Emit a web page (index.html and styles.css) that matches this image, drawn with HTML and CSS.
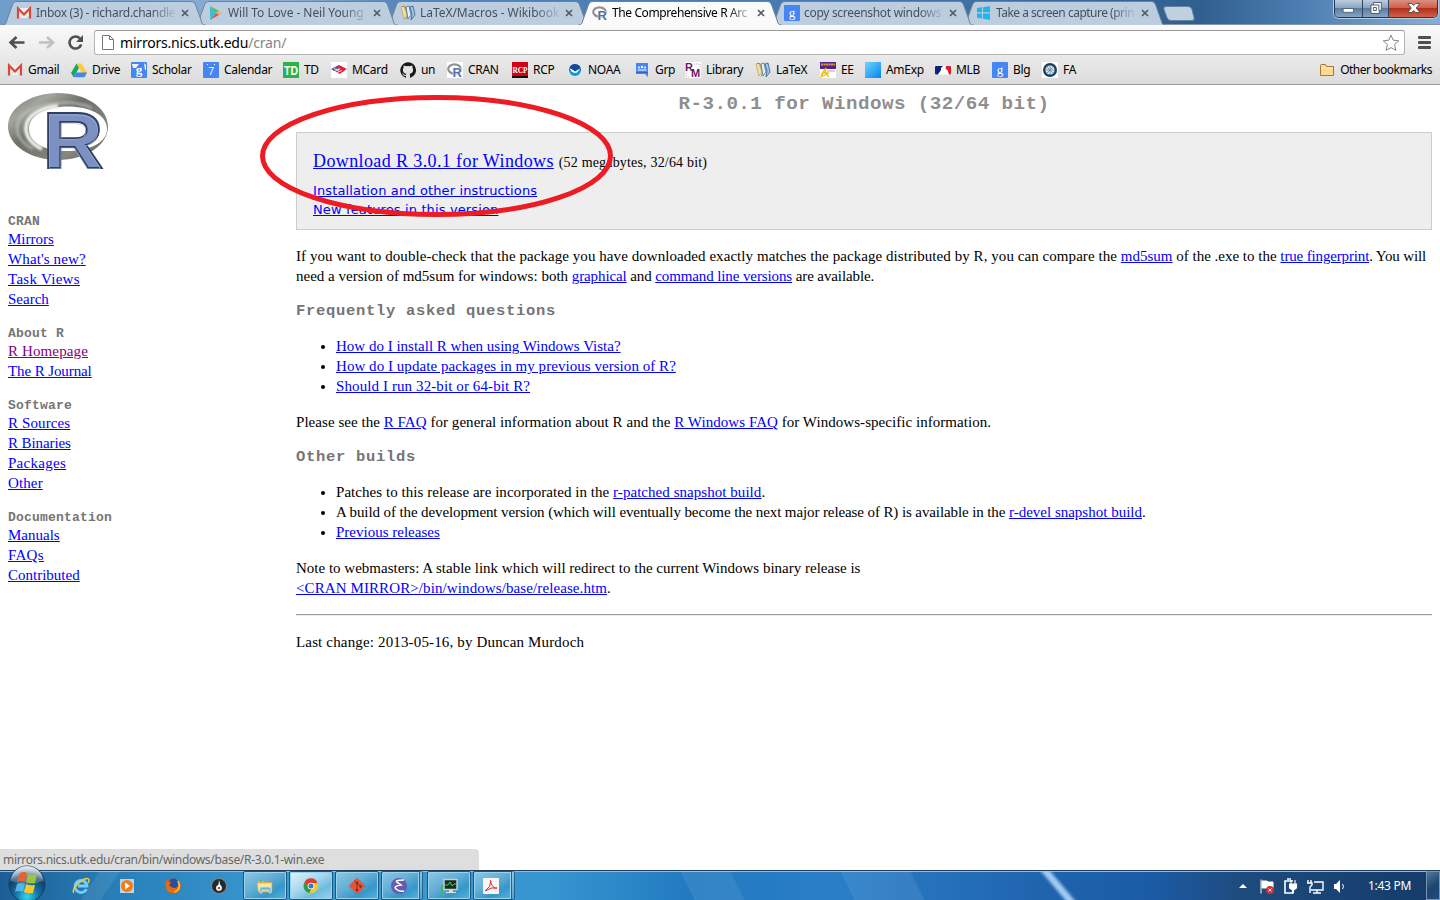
FILE: index.html
```html
<!DOCTYPE html>
<html lang="en">
<head>
<meta charset="utf-8">
<title>The Comprehensive R Archive Network</title>
<link rel="stylesheet" href="styles.css">
</head>
<body>
<svg class="defs" aria-hidden="true">
  <defs>
    <linearGradient id="ring" x1="0" y1="0" x2="1" y2="1"><stop offset="0" stop-color="#6f746d"/><stop offset=".22" stop-color="#a3a69e"/><stop offset=".42" stop-color="#6c7068"/><stop offset=".75" stop-color="#85887f"/><stop offset="1" stop-color="#555"/></linearGradient>
    <linearGradient id="gold" x1="0" y1="0" x2="0" y2="1"><stop offset="0" stop-color="#fff0bb"/><stop offset="1" stop-color="#f1c66a"/></linearGradient>
    <linearGradient id="amex" x1="0" y1="0" x2="1" y2="1"><stop offset="0" stop-color="#6fd4ff"/><stop offset="1" stop-color="#0584f0"/></linearGradient>
    <radialGradient id="orb" cx=".5" cy=".85" r=".8"><stop offset="0" stop-color="#37d6ee"/><stop offset=".4" stop-color="#1272a5"/><stop offset=".75" stop-color="#123f66"/><stop offset="1" stop-color="#8cabc2"/></radialGradient>
    <linearGradient id="orbshine" x1="0" y1="0" x2="0" y2="1"><stop offset="0" stop-color="#fff" stop-opacity=".75"/><stop offset="1" stop-color="#fff" stop-opacity=".1"/></linearGradient>
  </defs>
  <symbol id="gmail" viewBox="0 0 16 16"><path d="M2 3h12v10H2z" fill="#efefef"/><path d="M3 13l5-5 5 5" fill="none" stroke="#ccc"/><path d="M2 13.500V3.500l6 6 6-6v10" fill="none" stroke="#d9483b" stroke-width="2.200"/></symbol>
  <symbol id="books" viewBox="0 0 16 16"><path d="M1 2l3-1 3 9-3 4-1-4z" fill="#f4dfa0" stroke="#ba9c53" stroke-width=".7"/><path d="M2 1.500l3 0 3 8.500-2 4.500" fill="none" stroke="#8f7a43" stroke-width=".7"/><path d="M6 2l3-1 2 9-3 4z" fill="#e3f0f7" stroke="#476f94" stroke-width=".8"/><path d="M10 2l3-1 2 9-4 5 1-6z" fill="#9ecbed" stroke="#335b83" stroke-width=".8"/></symbol>
  <symbol id="x" viewBox="0 0 8 8"><path d="M1 1l6 6M7 1L1 7" stroke="#555b63" stroke-width="1.700"/></symbol>
  <symbol id="tabshape" viewBox="0 0 204 24"><path d="M0 24c4 0 4-2 5-5L10 5c1-3 2-4.500 5-4.500h174c3 0 4 1.500 5 4.500l5 14c1 3 1 5 5 5" fill="currentColor" stroke="#6e8297"/></symbol>
</svg>

<header class="browser">
  <div class="tabstrip">
    <div class="tab"><svg class="shape"><use href="#tabshape"/></svg><svg class="fav"><use href="#gmail"/></svg><span class="title snug">Inbox (3) - richard.chandle</span><svg class="close"><use href="#x"/></svg></div>
    <div class="tab"><svg class="shape"><use href="#tabshape"/></svg><svg class="fav" viewBox="0 0 16 16"><path d="M2 1l6 7-6 7z" fill="#37c2d3"/><path d="M2 1l9 5-3 2z" fill="#58b96e"/><path d="M11 6l3 2-3 2-3-2z" fill="#f4b44b"/><path d="M2 15l6-7 3 2z" fill="#df5267"/></svg><span class="title">Will To Love - Neil Young</span><svg class="close"><use href="#x"/></svg></div>
    <div class="tab"><svg class="shape"><use href="#tabshape"/></svg><svg class="fav"><use href="#books"/></svg><span class="title">LaTeX/Macros - Wikibook</span><svg class="close"><use href="#x"/></svg></div>
    <div class="tab active"><svg class="shape"><use href="#tabshape"/></svg><svg class="fav" viewBox="0 0 16 16"><ellipse cx="7.500" cy="7" rx="6.300" ry="4.600" fill="none" stroke="#8f9294" stroke-width="2.200"/><text x="5.500" y="14.500" class="mini-r">R</text></svg><span class="title">The Comprehensive R Arc</span><svg class="close"><use href="#x"/></svg></div>
    <div class="tab"><svg class="shape"><use href="#tabshape"/></svg><svg class="fav" viewBox="0 0 16 16"><rect width="16" height="16" rx="1" fill="#4486f4"/><text x="8" y="11.500" class="mini-g">g</text></svg><span class="title snug">copy screenshot windows</span><svg class="close"><use href="#x"/></svg></div>
    <div class="tab"><svg class="shape"><use href="#tabshape"/></svg><svg class="fav" viewBox="0 0 16 16"><path d="M1 3l5-.7v5H1zM7 2.200L14 1v6.300H7zM1 8.400h5v5.100l-5-.7zM7 8.400h7V15l-7-1.300z" fill="#22b4ee"/></svg><span class="title tight">Take a screen capture (prin</span><svg class="close"><use href="#x"/></svg></div>
    <svg class="newtab" viewBox="0 0 32 15"><path d="M3 .5h22q3 0 4 3l2 8q1 3-2 3H8q-3 0-4-3L1 3.500q-1-3 2-3z" fill="#bfd0df" stroke="#6481a0"/></svg>
    <div class="winbuttons">
      <span class="min"><svg viewBox="0 0 28 17"><rect x="8.500" y="8.500" width="11" height="4" fill="#fff" stroke="#56657a"/></svg></span>
      <span class="max"><svg viewBox="0 0 26 17"><path d="M10.500 2.500h8v8h-2v3h-8.500v-8.500h2.500z" fill="#fff" stroke="#4d5c70"/><path d="M10.500 7.500h3v3h-3zM10.500 5h5.500v5.500" fill="none" stroke="#4d5c70"/></svg></span>
      <span class="quit"><svg viewBox="0 0 46 17"><path d="M18 3.500h4l2 2 2-2h4L26.500 8l3.500 4.500h-4l-2-2-2 2h-4L21.500 8z" fill="#fff" stroke="#65504f"/></svg></span>
    </div>
  </div>
  <div class="toolbar">
    <svg class="nav" viewBox="0 0 95 35"><path d="M25.500 17.500H12M17.500 12l-6 5.500 6 5.500" fill="none" stroke="#505050" stroke-width="2.600"/><path d="M40 17.500h13M48 12l6 5.500-6 5.500" fill="none" stroke="#c1c1c1" stroke-width="2.600"/><path d="M81 13.500a6 6 0 1 0 1.200 6" fill="none" stroke="#505050" stroke-width="2.600"/><path d="M84 10v7h-7z" fill="#505050"/></svg>
    <div class="omnibox">
      <svg class="page" viewBox="0 0 12 15"><path d="M.5.500h7l4 4v10H.5zM7.500.500v4h4" fill="#fff" stroke="#777"/></svg>
      <span class="url">mirrors.nics.utk.edu<i>/cran/</i></span>
      <svg class="star" viewBox="0 0 18 18"><path d="M9 1.200l2.200 5 5.600.6-4.200 3.700 1.300 5.800L9 13.600 4.100 16.300l1.300-5.800L1.200 6.800l5.600-.6z" fill="#fff" stroke="#858585"/></svg>
    </div>
    <div class="burger"><b></b><b></b><b></b></div>
  </div>
  <nav class="bookmarks">
    <span><svg><use href="#gmail"/></svg>Gmail</span>
    <span><svg viewBox="0 0 16 16"><path d="M5.500 1.500h5L16 11h-5z" fill="#fc3"/><path d="M5.500 1.500L0 11l2.600 4.200L8 6z" fill="#17a765"/><path d="M5.500 10.500H16l-2.500 4.700H2.600z" fill="#4587e8"/></svg>Drive</span>
    <span><svg viewBox="0 0 16 16"><rect width="16" height="16" rx="1" fill="#4486f4"/><path d="M1 2h7L5 6H2zM13 1l2 2v5h-1z" fill="#fff" opacity=".9"/><text x="8" y="11.500" class="mini-g bold">g</text></svg>Scholar</span>
    <span><svg viewBox="0 0 16 16"><rect width="16" height="16" rx="1" fill="#4486f4"/><path d="M4 2.500h1M11 2.500h1" stroke="#fff"/><text x="8" y="13" class="mini-day">7</text></svg>Calendar</span>
    <span><svg viewBox="0 0 16 16"><rect width="16" height="16" fill="#2bb34b"/><text x="1" y="12.500" textLength="14" lengthAdjust="spacingAndGlyphs" class="mini-td">TD</text></svg>TD</span>
    <span><svg viewBox="0 0 16 16"><rect width="16" height="16" fill="#fff"/><path d="M0 7l6-3 3 2-6 3z" fill="#3767c5"/><path d="M5 4.500l3-1.500 8 4-3 1.500z" fill="#d8222f"/><path d="M3 8.500l6-2 5 2L8.500 12z" fill="#d8222f"/><path d="M4 9l5-2M6 10.500l5-2M3 6.500l5 2" stroke="#fff" stroke-width=".8"/></svg>MCard</span>
    <span><svg viewBox="0 0 16 16"><path d="M8 .2a8 8 0 0 0-2.500 15.500c.4.100.5-.2.500-.4v-1.400C3.800 14.400 3.300 13 3.300 13c-.4-.9-.9-1.200-.9-1.200-.7-.5.100-.5.100-.5.800.1 1.200.8 1.200.8.700 1.300 1.900.9 2.300.7.100-.5.300-.9.500-1.100-1.800-.2-3.600-.9-3.600-4 0-.9.300-1.600.8-2.100-.1-.2-.4-1 .1-2.100 0 0 .7-.2 2.200.8a7.500 7.500 0 0 1 4 0c1.500-1 2.200-.8 2.200-.8.500 1.100.200 1.900.1 2.100.5.500.8 1.200.8 2.100 0 3.100-1.900 3.800-3.600 4 .3.300.5.800.5 1.500v2.200c0 .2.100.5.500.4A8 8 0 0 0 8 .2z" fill="#191919"/></svg>un</span>
    <span><svg class="onwhite" viewBox="0 0 16 16"><ellipse cx="7.500" cy="7" rx="6.300" ry="4.600" fill="none" stroke="#8f9294" stroke-width="2.200"/><text x="5.500" y="14.500" class="mini-r">R</text></svg>CRAN</span>
    <span><svg viewBox="0 0 16 16"><rect width="16" height="16" fill="#d2001a"/><path d="M0 14h16v2H0z" fill="#111"/><text x=".5" y="11" textLength="15" lengthAdjust="spacingAndGlyphs" class="mini-rcp">RCP</text></svg>RCP</span>
    <span><svg viewBox="0 0 16 16"><circle cx="8" cy="8" r="6" fill="#079ddb"/><path d="M2 8a6 6 0 0 1 12 0L8 10z" fill="#164a9b"/><path d="M2 6l4 2 2 1.500L14 6l-4 4.500-2 .5-3-1z" fill="#fff"/></svg>NOAA</span>
    <span><svg viewBox="0 0 16 16"><path d="M2 1h12v14l-3-3H2z" fill="#4486f4"/><circle cx="5" cy="5.500" r="1" fill="#fff"/><circle cx="8" cy="5" r="1.200" fill="#fff"/><circle cx="11" cy="5.500" r="1" fill="#fff"/><path d="M3.500 8.500V7.500h9v1z" fill="#fff"/><path d="M2 10.500h12" stroke="#2f67c9"/></svg>Grp</span>
    <span><svg viewBox="0 0 16 16"><rect width="16" height="16" fill="#fff"/><path d="M9 2h6v4M1 11v4h4" fill="none" stroke="#c9a5c7" stroke-dasharray="1"/><text x="0" y="9" class="mini-rm">R</text><text x="6" y="15" class="mini-rm">M</text></svg>Library</span>
    <span><svg><use href="#books"/></svg>LaTeX</span>
    <span><svg viewBox="0 0 16 16"><rect width="16" height="16" fill="#fff"/><path d="M0 0h16v7H0z" fill="#56208c"/><path d="M1 2.500h14" stroke="#e29d37" stroke-dasharray="2 .5" stroke-width="2"/><path d="M1 13l5-7-1 5h4l-8 4 3-5 5 5" fill="none" stroke="#efc21b" stroke-width="1.300"/><path d="M7 9h8" stroke="#b79ad1"/></svg>EE</span>
    <span><svg viewBox="0 0 16 16"><rect width="16" height="16" fill="url(#amex)"/></svg>AmExp</span>
    <span><svg viewBox="0 0 16 16"><rect y="4" width="16" height="8.500" rx="1" fill="#fff"/><path d="M1 4h7L6 6v2l-3 4.500H1q-1 0-1-1V5q0-1 1-1z" fill="#0b257c"/><path d="M11 4h4q1 0 1 1v6.500q0 1-1 1h-1L12.500 8l-2-1z" fill="#dc1b2e"/><path d="M9 4.500h1.500L10 7l3 5.500h-1.500L9.500 9l-3 3.500H3L7 8z" fill="#fff"/></svg>MLB</span>
    <span><svg viewBox="0 0 16 16"><rect width="16" height="16" rx="1" fill="#4486f4"/><text x="8" y="11.500" class="mini-g">g</text></svg>Blg</span>
    <span><svg viewBox="0 0 16 16"><rect width="16" height="16" fill="#fff"/><circle cx="8" cy="8" r="7" fill="#173f63"/><circle cx="8" cy="8" r="4.600" fill="#dce5e7"/><path d="M8 4v8M4 8h8M5 5l6 6M11 5l-6 6" stroke="#68899c" stroke-width=".8"/></svg>FA</span>
    <span class="other"><svg viewBox="0 0 16 16"><path d="M1.500 13.500v-10q0-1 1-1h4l1 2h7v9z" fill="#ffd98c" stroke="#a9742d"/><path d="M2 6h12" stroke="#fff0c8"/></svg>Other bookmarks</span>
  </nav>
</header>

<main class="page-body">
  <aside class="side">
    <svg class="rlogo" viewBox="0 0 100 76"><path fill-rule="evenodd" d="M50 0c28 0 50 15 50 33.500S78 67 50 67 0 52 0 33.500 22 0 50 0zM60 13.500C38 13.500 21 22 21 36s16 22 38 22 40-8 40-22-17-22.500-39-22.500z" fill="url(#ring)"/><path d="M84 15C58 3 9 12 9 35c0 8 6 16 16 21" fill="none" stroke="#c2c5bd" stroke-width="3" opacity=".6" class="soft"/><path d="M50 13c-20 2-32 11-32 22 0 9 6 16 16 21" fill="none" stroke="#eeefeb" stroke-width="4" class="soft"/><text x="34.500" y="75" textLength="61" lengthAdjust="spacingAndGlyphs" class="logo-r">R</text><text x="36" y="74.500" textLength="58" lengthAdjust="spacingAndGlyphs" class="logo-r inner">R</text></svg>
    <section><h4>CRAN</h4><a>Mirrors</a><a class="wide">What's new?</a><a class="wider">Task Views</a><a>Search</a></section>
    <section><h4>About R</h4><a class="visited wide">R Homepage</a><a class="narrow">The R Journal</a></section>
    <section><h4>Software</h4><a class="wide">R Sources</a><a class="narrow">R Binaries</a><a class="wider">Packages</a><a class="wide">Other</a></section>
    <section><h4>Documentation</h4><a>Manuals</a><a class="wider">FAQs</a><a>Contributed</a></section>
  </aside>
  <article class="content">
    <h1>R-3.0.1 for Windows (32/64 bit)</h1>
    <div class="download">
      <p class="main-link"><a>Download R 3.0.1 for Windows</a> <small>(52 megabytes, 32/64 bit)</small></p>
      <p class="sub-link"><a>Installation and other instructions</a></p>
      <p class="sub-link"><a>New features in this version</a></p>
    </div>
    <p><span class="check">If you want to double-check that the package you have downloaded exactly matches the package distributed by R, you can compare the </span><a>md5sum</a> of the .exe to the <span class="verify"><a>true fingerprint</a>. You will</span><br>need a version of md5sum for windows: both <span class="need"><a>graphical</a> and <a>command line versions</a> are available.</span></p>
    <h3>Frequently asked questions</h3>
    <ul><li><a>How do I install R when using Windows Vista?</a></li><li class="loose"><a>How do I update packages in my previous version of R?</a></li><li class="looser"><a>Should I run 32-bit or 64-bit R?</a></li></ul>
    <p class="loose">Please see the <a>R FAQ</a> for general information about R and the <a>R Windows FAQ</a> for Windows-specific information.</p>
    <h3>Other builds</h3>
    <ul><li class="loose">Patches to this release are incorporated in the <a>r-patched snapshot build</a>.</li><li><span class="devel">A build of the development version (which will eventually become the next major release of R) is available in the </span><a>r-devel snapshot build</a>.</li><li><a>Previous releases</a></li></ul>
    <p>Note to webmasters: A stable link which will redirect to the current Windows binary release is<br><span class="looser"><a>&lt;CRAN MIRROR&gt;/bin/windows/base/release.htm</a>.</span></p>
    <hr>
    <p class="changed">Last change: 2013-05-16, by Duncan Murdoch</p>
  </article>
</main>
<svg class="circle" viewBox="0 0 354 123"><ellipse cx="176.500" cy="61" rx="174" ry="58.500" fill="none" stroke="#ed1c24" stroke-width="5"/></svg>

<div class="status">mirrors.nics.utk.edu/cran/bin/windows/base/R-3.0.1-win.exe</div>
<footer class="taskbar">
  <svg class="glow" viewBox="0 0 1440 30" preserveAspectRatio="none"><path d="M100 0h20l-20 30H80zM680 0h50l15 30h-50zM840 0h70l15 30h-70z" fill="#fff" opacity=".08"/><path d="M1042-4l32 38" fill="none" stroke="#a9d0f5" stroke-width="7" opacity=".95" class="streak"/></svg>
  <svg class="start" viewBox="0 0 38 36"><circle cx="19" cy="19" r="18" fill="url(#orb)" stroke="#15405f"/><path d="M3 16a16 15 0 0 1 32 0q-16 7-32 0z" fill="url(#orbshine)"/><path d="M12 8q4-2 7 0l-2 9q-4-2-8 0z" fill="#ec6030"/><path d="M20 9q5 2 9 0l-2 9q-5 1-9-1z" fill="#9ac53c"/><path d="M9 19q4-2 8 0l-2 8q-4-2-8 0z" fill="#51b6e9"/><path d="M18 19q4 2 9 1l-2 8q-5 1-9-1z" fill="#fbc72f"/></svg>
  <div class="quick">
    <svg viewBox="0 0 18 18"><path d="M14.500 12a6 6 0 1 1 .5-3H6" fill="none" stroke="#75cffa" stroke-width="2.800"/><path d="M2 16C-2 12 13-1 16.500 2c1 1 .2 3-.5 4" fill="none" stroke="#f5c63d" stroke-width="1.500"/></svg>
    <svg viewBox="0 0 18 18"><rect x="2" y="2" width="14" height="14" fill="#b1d6ee"/><circle cx="9" cy="9" r="6" fill="#f47c13"/><path d="M7 5.500l5 3.500-5 3.500z" fill="#fff"/></svg>
    <svg viewBox="0 0 18 18"><circle cx="9" cy="9" r="7.500" fill="#dc5a17"/><circle cx="9.500" cy="6.500" r="5" fill="#284f9c"/><path d="M2 3q2 2 5 2l-2 3q4 5 9 2l2-6q3 12-7 12Q0 16 2 3z" fill="#e86a13"/><path d="M14 4q4 9-4 11" fill="none" stroke="#ffc43b" stroke-width="1.500"/></svg>
    <svg viewBox="0 0 18 18"><circle cx="9" cy="9" r="7.500" fill="#25282c" stroke="#858b92"/><circle cx="9" cy="11" r="3" fill="#e9e9e9"/><path d="M9 3l2 8H8z" fill="#fff"/><circle cx="9" cy="11" r="1" fill="#333"/></svg>
  </div>
  <div class="tasks">
    <span><svg viewBox="0 0 18 18"><path d="M2 4h5l1 1h8v10H2z" fill="#e2b94c"/><path d="M1 6h15v9H2z" fill="url(#gold)" stroke="#c6a048" stroke-width=".7"/><path d="M4 16v-4q0-2 2-2h7q2 0 2 2v4h-2v-3H6v3z" fill="#61bbdc" stroke="#d8f1fa" stroke-width=".6"/><path d="M4 4h2" stroke="#25b536"/></svg></span>
    <span class="current"><svg viewBox="0 0 18 18"><circle cx="9" cy="9" r="7" fill="#f9c929"/><path d="M2.500 5.500A7 7 0 0 1 15.500 6H9L6 11z" fill="#df3c2f"/><path d="M2.500 5.500l4 6L9 12l-1.500 4A7 7 0 0 1 2.500 5.500z" fill="#259f4a"/><circle cx="9" cy="9" r="3.300" fill="#fff"/><circle cx="9" cy="9" r="2.500" fill="#3979bd"/></svg></span>
    <span><svg viewBox="0 0 18 18"><path d="M9 .8L17.200 9 9 17.200.8 9z" fill="#ed4f32"/><path d="M6.500 3.500L9 6v7M9 6.500l4 3" fill="none" stroke="#8a3426" stroke-width="1"/><circle cx="9" cy="6" r="1.200" fill="#623025"/><circle cx="9" cy="13" r="1.200" fill="#623025"/><circle cx="12.500" cy="9.500" r="1.200" fill="#623025"/></svg></span>
    <span class="stack"><svg viewBox="0 0 18 18"><circle cx="9" cy="9" r="8" fill="#655baf"/><path d="M14 3Q3 3 8 6l3 2Q3 9 6 12t8 2" fill="none" stroke="#fff" stroke-width="1.500"/></svg></span>
    <span class="monitor"><svg viewBox="0 0 18 18"><rect x="4" y="2.500" width="13" height="10" fill="#182c24" stroke="#c7cccd" stroke-width="1.500"/><path d="M5 8h3l2-3 2 4 2-2h2" fill="none" stroke="#2cdb4a"/><path d="M9 13h4v2h3v1H6v-1h3z" fill="#d8dede"/><path d="M1 8h2v8H1z" fill="#3bba47"/></svg></span>
    <span class="stack"><svg viewBox="0 0 18 18"><rect x="1" y="1" width="16" height="16" rx="1" fill="#f8f6f5"/><path d="M3 14Q9 10 9 4q-1.500-2 0 2 2.500 6 6 5-5-1.500-12 3" fill="none" stroke="#d72d2d"/></svg></span>
  </div>
  <div class="tray">
    <svg viewBox="0 0 112 20"><path d="M3 12l4-4 4 4z" fill="#fff"/><path d="M25 3.500v14M26 5h5l1 1h5v6H26z" fill="#fff" stroke="#fff"/><circle cx="34" cy="14" r="4" fill="#d43032"/><path d="M32.500 12.500l3 3m0-3l-3 3" stroke="#fff"/><path d="M57 5h-8v12h8M51 3h4" fill="none" stroke="#fff" stroke-width="1.600"/><path d="M53.500 8h7v4l-3 2v3h-1v-3l-3-2zM55 4v4m4-4v4" fill="#fff" stroke="#fff" stroke-width="1.100"/><path d="M78 6h9v8H75M81 14v3M77 17h8M72 4v3m3-3v3M71 7h5v2l-2 2v6" fill="none" stroke="#fff" stroke-width="1.400"/><path d="M98 8h2l4-4v13l-4-4h-2z" fill="#fff"/><path d="M106.500 8q2 2.500 0 5" fill="none" stroke="#fff"/></svg>
    <time>1:43 PM</time>
    <i class="peek"></i>
  </div>
</footer>
</body>
</html>
```
FILE: styles.css
```css
* { box-sizing: border-box; }
body { margin: 0; width: 1440px; height: 900px; overflow: hidden; position: relative; background: #fff; display: flex; flex-direction: column; font-family: "Liberation Serif", serif; font-size: 15px; line-height: 20px; color: #000; }
svg { display: block; flex: none; }
.defs { position: absolute; width: 0; height: 0; }

.mini-g { font: 13px "Liberation Serif", serif; fill: #fff; text-anchor: middle; letter-spacing: 0; }
.mini-g.bold { font-weight: bold; }
.mini-r { font: bold 13px "Liberation Sans", sans-serif; fill: #5570a8; stroke: #fff; stroke-width: 1px; paint-order: stroke; letter-spacing: 0; }
.mini-day { font: 10px "Open Sans", sans-serif; fill: #fff; text-anchor: middle; letter-spacing: 0; }
.mini-td { font: bold 13px "Liberation Sans", sans-serif; fill: #fff; letter-spacing: 0; }
.mini-rcp { font: bold 9px "Liberation Serif", serif; fill: #fff; letter-spacing: 0; }
.mini-rm { font: bold 11px "Liberation Sans", sans-serif; fill: #68186a; letter-spacing: 0; }
.logo-r { font: bold 79px "Liberation Sans", sans-serif; fill: #7d90c2; stroke: #303e62; stroke-width: 1.800px; }
.logo-r.inner { font-size: 78px; fill: none; stroke: #a9b8df; stroke-width: .5px; }
.soft { filter: blur(1px); }

.browser { height: 85px; border-bottom: 1px solid #9d9d9d; background: linear-gradient(#fafafa 25px, #dcdcdc 84px); font-family: "Noto Sans", sans-serif; font-size: 12px; }
.tabstrip { height: 25px; display: flex; padding-left: 2px; padding-top: 1px; background: linear-gradient(90deg, #6f9dcc 0, #8cb0d6 20%, #5285b8 28%, #4579ad 60%, #31608f 83.500%, #4a7cb0 90%, #86afd6 100%); border-bottom: 1px solid #8295a9; }
.tab { position: relative; width: 204px; height: 24px; margin-right: -12px; display: flex; align-items: center; padding: 0 13px 0 14px; color: #bccde0; z-index: 1; flex: none; }
.tab:nth-child(1) { z-index: 4; } .tab:nth-child(2) { z-index: 3; } .tab:nth-child(3) { z-index: 2; } .tab:nth-child(5) { z-index: 3; }
.tab.active { z-index: 6; color: #fafafa; }
.shape { position: absolute; left: 0; top: 0; width: 204px; height: 24px; }
.fav { position: relative; width: 16px; height: 16px; }
.title { position: relative; margin-left: 4px; width: 140px; overflow: hidden; white-space: nowrap; color: #46505c; letter-spacing: -.05px; mask-image: linear-gradient(90deg, #000 115px, transparent 142px); }
.title.snug { letter-spacing: -.3px; }
.title.tight { letter-spacing: -.5px; }
.active .title { color: #000; letter-spacing: -.4px; }
.close { position: relative; width: 8px; height: 8px; margin-left: 5px; }
.newtab { width: 32px; height: 15px; margin: 5px 0 0 9px; }
.winbuttons { margin: -1px 2px 0 auto; width: 104px; height: 18px; display: flex; border: 1px solid #26384f; border-top: 0; border-radius: 0 0 5px 5px; overflow: hidden; box-shadow: 0 0 0 1px #b4cde4; }
.winbuttons span { background: linear-gradient(#bccddd, #8aa5c1 45%, #5b7da2 50%, #86a5c5); border-right: 1px solid #33465e; }
.winbuttons svg { height: 17px; width: 100%; }
.min { width: 28px; } .max { width: 27px; }
.winbuttons .quit { width: 48px; border: 0; background: linear-gradient(#dc9182, #ce604d 45%, #b3301c 50%, #ce6249); }

.toolbar { height: 35px; display: flex; align-items: center; }
.nav { width: 95px; height: 35px; margin-left: -1px; }
.omnibox { width: 1311px; height: 25px; border: 1px solid #b3b3b3; border-top-color: #999; border-radius: 3px; background: #fff; display: flex; align-items: center; padding: 0 4px 0 7px; }
.page { width: 12px; height: 15px; }
.url { margin-left: 6px; flex: 1; font-size: 14px; letter-spacing: -.2px; }
.url i { color: #858585; font-style: normal; }
.star { width: 18px; height: 18px; }
.burger { margin-left: 13px; width: 13px; display: grid; gap: 2px; }
.burger b { height: 3px; background: #505050; border-radius: 1px; }
.bookmarks { height: 24px; padding: 0 8px 4px 7px; display: grid; grid-template-columns: 64px 60px 72px 80px 48px 69px 47px 65px 55px 67px 51px 70px 65px 45px 70px 57px 50px 60px 1fr; align-items: center; letter-spacing: -.3px; }
.bookmarks span { display: flex; align-items: center; gap: 5px; white-space: nowrap; }
.bookmarks svg { width: 16px; height: 16px; }
.bookmarks .onwhite { background: #fff; }
.bookmarks .other { justify-self: end; letter-spacing: -.5px; }

a { color: #00f; text-decoration: underline; }
a.visited { color: #800080; }
p, h1, h3, h4, ul { margin: 0; }
.page-body { display: flex; padding: 8px 8px 0; }
.side { width: 288px; display: flex; flex-direction: column; gap: 16px; }
.side section { display: flex; flex-direction: column; align-items: flex-start; }
.rlogo { width: 100px; height: 76px; margin-bottom: 28px; }
.wide { letter-spacing: .12px; }
.wider { letter-spacing: .28px; }
.narrow { letter-spacing: -.1px; }
h1, h3, h4 { font-family: "Liberation Mono", monospace; color: #757575; }
h4 { font-size: 13px; line-height: 14px; padding-top: 2px; letter-spacing: .2px; }
.content { width: 1136px; display: flex; flex-direction: column; }
h1 { color: #8e8e8e; font-size: 19.200px; line-height: 22px; text-align: center; margin-bottom: 17px; letter-spacing: .45px; }
.download { height: 98px; border: 1px solid #ccc; background: #eee; padding: 17px 16px; margin-bottom: 16px; }
.main-link { font-size: 18px; line-height: 22px; margin-bottom: 7px; letter-spacing: .39px; }
small { font-size: 14px; letter-spacing: .18px; }
.sub-link { font-family: "DejaVu Sans", sans-serif; font-size: 13px; line-height: 19px; letter-spacing: .13px; }
h3 { font-size: 15.500px; line-height: 18px; padding-top: 2px; margin: 14px 0 16px; letter-spacing: .7px; }
ul { padding-left: 40px; margin-bottom: 16px; }
hr { width: 100%; height: 2px; margin: 16px 0; border: 0; border-top: 1px solid #9a9a9a; border-bottom: 1px solid #eee; }
.content p, .content li { white-space: nowrap; }
.check { letter-spacing: .061px; }
.verify { letter-spacing: -.15px; }
.need { letter-spacing: -.11px; }
.loose { letter-spacing: .046px; }
.looser { letter-spacing: .1px; }
.devel { letter-spacing: -.104px; }
.changed { letter-spacing: .155px; }
.circle { position: absolute; left: 260px; top: 95px; width: 354px; height: 123px; }

.status { position: absolute; left: 0; top: 849px; width: 479px; height: 21px; padding-left: 3px; border-radius: 0 4px 0 0; background: #dedede; color: #666; font-family: "Noto Sans", sans-serif; font-size: 12px; line-height: 22px; letter-spacing: -.31px; }
.taskbar { position: relative; height: 30px; margin-top: auto; border-top: 1px solid #203f5c; background: linear-gradient(90deg, #1d5d95, #287fb8 8%, #3b9bd0 20%, #3795d0 38%, #217abf 48%, #2a7ec8 58%, #2064ae 72%, #1b5ba6 80%, #1e4b7e 86%, #143b69 100%); display: flex; box-shadow: inset 0 1px #91bddd; }
.glow { position: absolute; inset: 0; width: 1440px; height: 30px; }
.streak { filter: blur(1.500px); }
.start { position: relative; width: 38px; height: 36px; margin: -6px 0 0 8px; }
.quick { position: relative; display: flex; align-items: center; gap: 28px; margin-left: 26px; }
.quick svg, .tasks svg { width: 18px; height: 18px; }
.tasks { position: relative; display: flex; gap: 2px; margin-left: 15px; }
.tasks span { width: 44px; height: 29px; display: flex; align-items: center; justify-content: center; border: 1px solid #1c557e; border-radius: 2px; box-shadow: inset 0 0 0 1px #9bd3ee; background: linear-gradient(150deg, #8dc7e5 0, #64aed5 42%, #3797ca 70%, #55b3dd); }
.tasks .current { background: linear-gradient(150deg, #e4f4fb, #a5d7ed 45%, #6ebbde 70%, #9bd4ed); }
.tasks .stack { width: 42px; padding-right: 4px; border-right: 4px double #25638e; }
.monitor { margin-left: 2px; }
.tray { position: relative; margin-left: auto; display: flex; align-items: center; color: #fff; font-family: "Noto Sans", sans-serif; font-size: 12px; letter-spacing: -.3px; }
.tray svg { width: 112px; height: 20px; margin-right: 20px; }
.peek { width: 14px; height: 29px; margin-left: 15px; border: 1px solid #7995b0; background: linear-gradient(145deg, #56789a, #1b4470 55%, #214e7e); }
```
